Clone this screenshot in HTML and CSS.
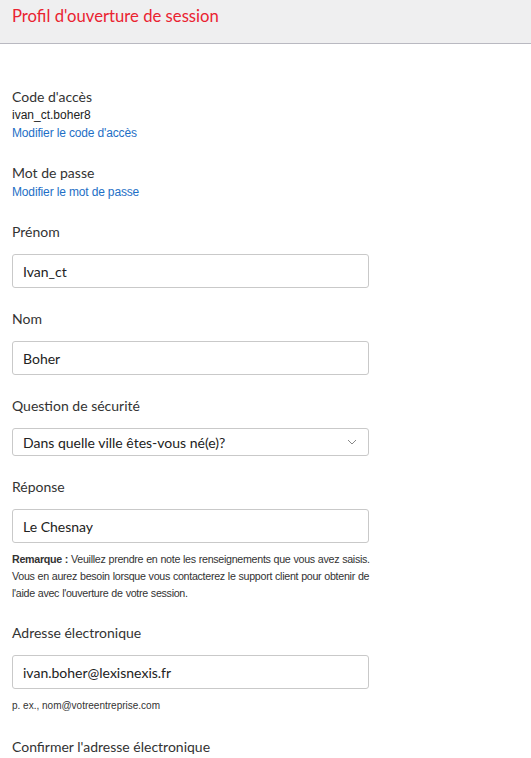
FILE: index.html
```html
<!DOCTYPE html>
<html lang="fr">
<head>
<meta charset="utf-8">
<title>Profil d'ouverture de session</title>
<link rel="stylesheet" href="styles.css">
</head>
<body>
<header class="page-header">
  <h1 class="page-title">Profil d'ouverture de session</h1>
</header>
<main class="form">
  <section class="info-block">
    <div class="label">Code d'accès</div>
    <div class="value">ivan_ct.boher8</div>
    <a class="link" href="#">Modifier le code d'accès</a>
  </section>
  <section class="info-block">
    <div class="label">Mot de passe</div>
    <a class="link" href="#">Modifier le mot de passe</a>
  </section>
  <section class="field">
    <label class="label">Prénom</label>
    <div class="input">Ivan_ct</div>
  </section>
  <section class="field">
    <label class="label">Nom</label>
    <div class="input">Boher</div>
  </section>
  <section class="field">
    <label class="label">Question de sécurité</label>
    <div class="input select">
      <span>Dans quelle ville êtes-vous né(e)?</span>
      <svg class="chevron" width="10" height="6" viewBox="0 0 10 6"><path d="M1 1 L5 5 L9 1" fill="none" stroke="#888" stroke-width="1"/></svg>
    </div>
  </section>
  <section class="field">
    <label class="label">Réponse</label>
    <div class="input">Le Chesnay</div>
    <p class="note"><strong>Remarque :</strong> Veuillez prendre en note les renseignements que vous avez saisis. Vous en aurez besoin lorsque vous contacterez le support client pour obtenir de l'aide avec l'ouverture de votre session.</p>
  </section>
  <section class="field">
    <label class="label">Adresse électronique</label>
    <div class="input">ivan.boher@lexisnexis.fr</div>
    <p class="hint">p. ex., nom@votreentreprise.com</p>
  </section>
  <section class="field field-last">
    <label class="label">Confirmer l'adresse électronique</label>
  </section>
</main>
</body>
</html>
```
FILE: styles.css
```css
html, body {
  margin: 0;
  padding: 0;
  background: #ffffff;
}
body {
  font-family: Lato, "Liberation Sans", sans-serif;
  color: #333333;
}
.page-header {
  height: 43px;
  background: #efeff0;
  border-bottom: 1px solid #b9b9c1;
  box-sizing: content-box;
  display: flex;
  align-items: flex-start;
  padding: 0 12px;
}
.page-title {
  margin: 6px 0 0;
  font-size: 16.7px;
  font-weight: 400;
  line-height: 20px;
  color: #ea2330;
}
.form {
  padding: 44px 12px 0;
  display: flex;
  flex-direction: column;
}
.info-block {
  display: flex;
  flex-direction: column;
  margin-bottom: 22px;
}
.field {
  display: flex;
  flex-direction: column;
  margin-bottom: 22px;
}
.label {
  font-size: 14px;
  line-height: 18px;
  color: #333333;
}
.value {
  font-family: "Liberation Sans", Arial, sans-serif;
  font-size: 12px;
  line-height: 18px;
  color: #222222;
}
.link {
  font-family: "Liberation Sans", Arial, sans-serif;
  font-size: 12px;
  letter-spacing: -0.15px;
  line-height: 18px;
  color: #1e6fc6;
  text-decoration: none;
}
.info-block .label + .link {
  margin-top: 1px;
}
.input {
  margin-top: 13px;
  width: 357px;
  height: 34px;
  box-sizing: border-box;
  border: 1px solid #c9c9c9;
  border-radius: 3px;
  padding: 0 10px;
  display: flex;
  align-items: center;
  font-size: 14px;
  color: #222222;
}
.select {
  height: 28px;
  justify-content: space-between;
  padding-right: 11px;
}
.chevron {
  display: block;
}
.note {
  margin: 8px 0 0;
  width: 362px;
  font-family: "Liberation Sans", Arial, sans-serif;
  font-size: 10.7px;
  letter-spacing: -0.3px;
  word-spacing: 0.3px;
  line-height: 17px;
  color: #333333;
}
.note strong {
  font-weight: 700;
}
.hint {
  margin: 10px 0 0;
  font-family: "Liberation Sans", Arial, sans-serif;
  font-size: 10px;
  line-height: 14px;
  color: #333333;
}
.field-last {
  margin-top: 3px;
}
```
